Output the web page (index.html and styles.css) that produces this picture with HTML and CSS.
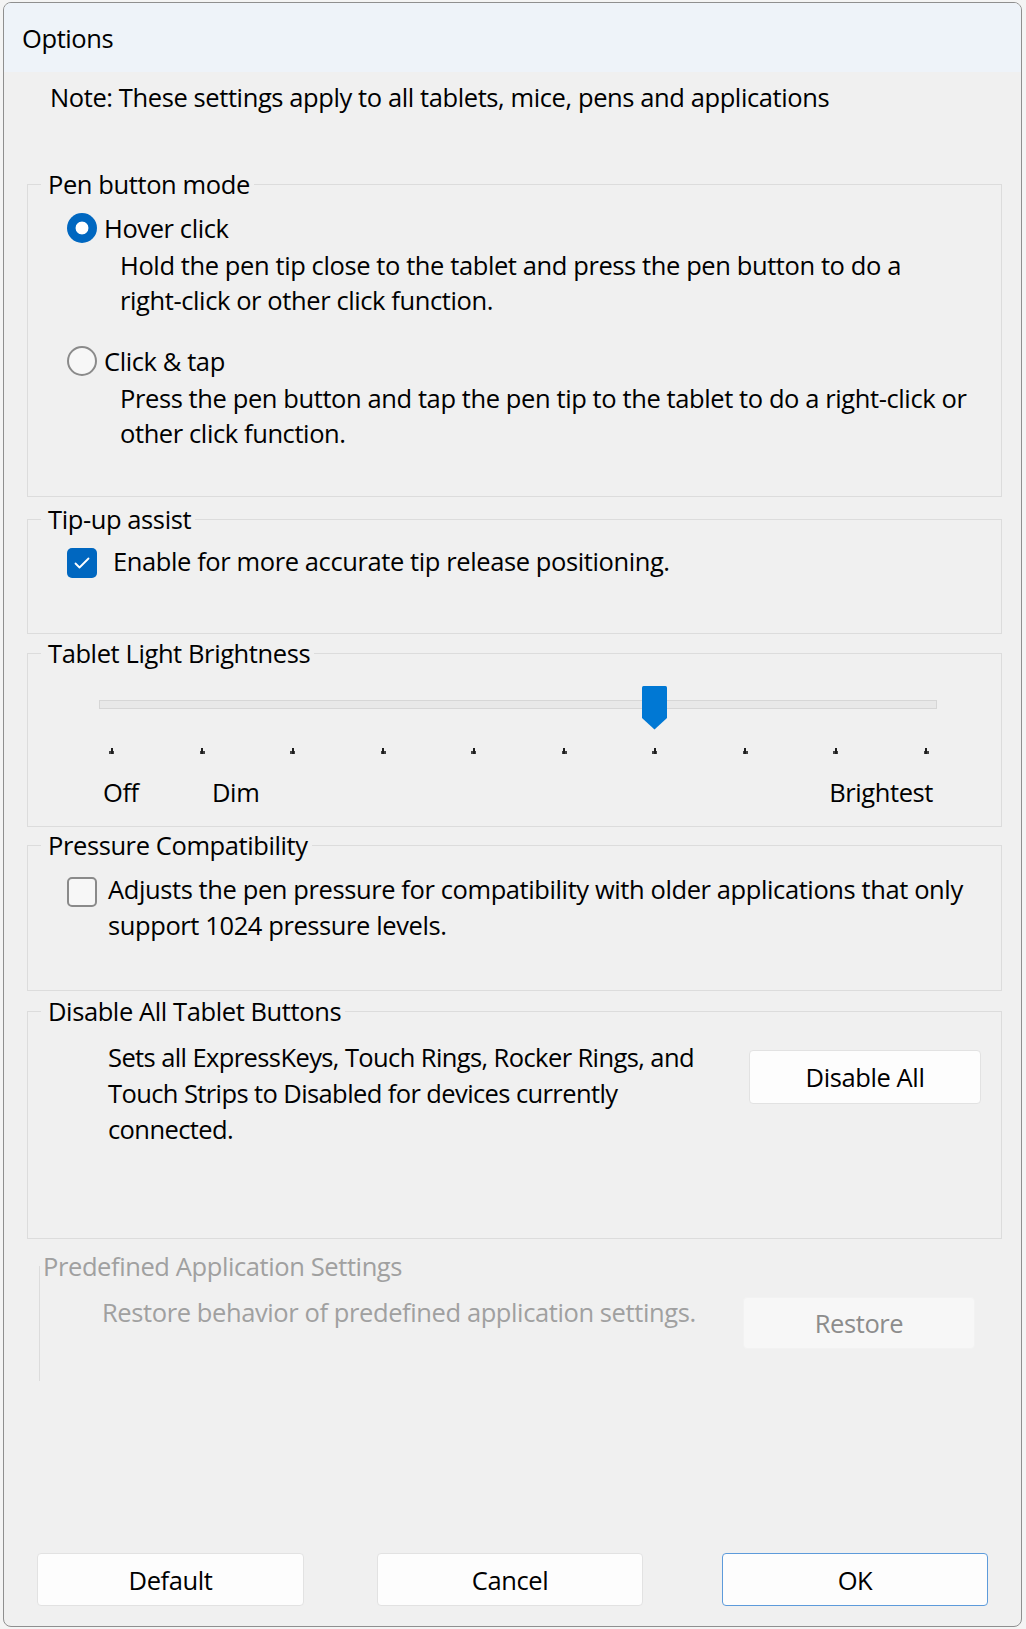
FILE: index.html
```html
<!DOCTYPE html>
<html lang="en">
<head>
<meta charset="utf-8">
<title>Options</title>
<link rel="stylesheet" href="styles.css">
</head>
<body>
<div class="window">
  <div class="titlebar">Options</div>
  <div class="client">
    <p class="note">Note: These settings apply to all tablets, mice, pens and applications</p>

    <fieldset class="group g-pen">
      <legend>Pen button mode</legend>
      <div class="gbody">
        <div class="opt">
          <span class="radio checked"></span><span class="opt-label">Hover click</span>
        </div>
        <p class="desc">Hold the pen tip close to the tablet and press the pen button to do a<br>right-click or other click function.</p>
        <div class="opt opt-2">
          <span class="radio"></span><span class="opt-label">Click &amp; tap</span>
        </div>
        <p class="desc">Press the pen button and tap the pen tip to the tablet to do a right-click or<br>other click function.</p>
      </div>
    </fieldset>

    <fieldset class="group g-tip">
      <legend>Tip-up assist</legend>
      <div class="gbody">
        <div class="chk-row">
          <span class="chk checked"><svg viewBox="0 0 30 30" width="30" height="30"><path d="M8.5 15.5 L12.5 19.5 L21.5 10.5" fill="none" stroke="#fff" stroke-width="1.8" stroke-linecap="round" stroke-linejoin="round"/></svg></span>
          <span class="chk-text wide-gap">Enable for more accurate tip release positioning.</span>
        </div>
      </div>
    </fieldset>

    <fieldset class="group g-light">
      <legend>Tablet Light Brightness</legend>
      <div class="gbody">
        <div class="slider">
          <div class="track"></div>
          <svg class="thumb" width="25" height="44" viewBox="0 0 25 44"><path d="M1.5 0 H23.5 Q25 0 25 1.5 V32 L12.5 43.5 L0 32 V1.5 Q0 0 1.5 0 Z" fill="#0078d4"/></svg>
          <div class="ticks">
            <span class="tick"></span><span class="tick"></span><span class="tick"></span><span class="tick"></span><span class="tick"></span>
            <span class="tick"></span><span class="tick"></span><span class="tick"></span><span class="tick"></span><span class="tick"></span>
          </div>
        </div>
        <div class="labels">
          <span class="lbl-off">Off</span><span class="lbl-dim">Dim</span><span class="lbl-bright">Brightest</span>
        </div>
      </div>
    </fieldset>

    <fieldset class="group g-press">
      <legend>Pressure Compatibility</legend>
      <div class="gbody">
        <div class="chk-row">
          <span class="chk"></span>
          <span class="chk-text">Adjusts the pen pressure for compatibility with older applications that only<br>support 1024 pressure levels.</span>
        </div>
      </div>
    </fieldset>

    <fieldset class="group g-disable">
      <legend>Disable All Tablet Buttons</legend>
      <div class="gbody action-row">
        <p class="action-text">Sets all ExpressKeys, Touch Rings, Rocker Rings, and<br>Touch Strips to Disabled for devices currently<br>connected.</p>
        <button class="btn btn-action" type="button">Disable All</button>
      </div>
    </fieldset>

    <fieldset class="group g-predef" disabled>
      <legend>Predefined Application Settings</legend>
      <div class="gbody action-row">
        <p class="action-text">Restore behavior of predefined application settings.</p>
        <button class="btn btn-action btn-disabled" type="button">Restore</button>
      </div>
    </fieldset>

    <div class="btn-row">
      <button class="btn btn-foot" type="button">Default</button>
      <button class="btn btn-foot btn-cancel" type="button">Cancel</button>
      <button class="btn btn-foot btn-ok" type="button">OK</button>
    </div>
  </div>
</div>
</body>
</html>
```
FILE: styles.css
```css
* { box-sizing: border-box; }
html, body { margin: 0; padding: 0; }
body {
  width: 1026px;
  height: 1629px;
  overflow: hidden;
  background: #f4f4f4;
  font-family: "Open Sans", "Noto Sans", sans-serif;
  font-size: 25.5px;
  letter-spacing: -0.4px;
  color: #000;
  white-space: nowrap;
}
p { margin: 0; }

.window {
  margin: 2px 0 0 3px;
  width: 1019px;
  height: 1625px;
  border: 1px solid #8f8f8f;
  border-radius: 8px;
  overflow: hidden;
  background: #f0f0f0;
  display: flex;
  flex-direction: column;
}
.titlebar {
  flex: none;
  height: 69px;
  background: #eef3f9;
  padding: 17px 0 0 18px;
  line-height: 36px;
}
.client {
  flex: 1;
  display: flex;
  flex-direction: column;
  padding: 7px 19px 20px 23px;
}
.note {
  line-height: 36px;
  margin-left: 23px;
}

.group {
  margin: 0;
  padding: 0;
  border: 1px solid #dcdcdc;
  min-width: 0;
}
.group legend {
  margin-left: 13px;
  padding: 0 4px 0 7px;
  line-height: 36px;
}
.g-pen { margin-top: 51px; }
.g-tip { margin-top: 4px; }
.g-light { margin-top: 1px; }
.g-press { margin-top: 0; }
.g-disable { margin-top: 2px; }
.g-predef {
  margin: 9px 0 0 12px;
  border: none;
  border-left: 1px solid #dcdcdc;
  color: #a0a0a0;
}
.g-predef legend { margin-left: 3px; padding: 0; }

/* pen button mode */
.g-pen .gbody { padding: 8px 0 45px 39px; }
.opt {
  display: flex;
  align-items: center;
  height: 36px;
  line-height: 36px;
}
.opt-2 { margin-top: 25px; }
.radio {
  flex: none;
  width: 30px;
  height: 30px;
  border-radius: 50%;
  border: 2px solid #8a8a8a;
  background: #f7f7f7;
  margin-right: 7px;
}
.radio.checked {
  border: none;
  background: radial-gradient(circle, #fff 0 6px, #0067c0 6.8px);
}
.desc {
  margin: 2px 0 0 53px;
  line-height: 35px;
}

/* checkboxes */
.g-tip .gbody { padding: 6px 0 54px 39px; }
.g-press .gbody { padding: 8px 0 47px 39px; }
.chk-row {
  display: flex;
  align-items: flex-start;
  line-height: 36px;
}
.chk {
  flex: none;
  width: 30px;
  height: 30px;
  margin-top: 5px;
  border: 2px solid #8a8a8a;
  border-radius: 5px;
  background: #f7f7f7;
  margin-right: 11px;
}
.g-press .chk { margin-top: 6px; }
.chk svg { display: block; }
.chk.checked {
  border: none;
  background: #0067c0;
}
.chk-text.wide-gap { margin-left: 5px; }

/* slider */
.g-light .gbody { padding: 29px 0 16px 0; }
.slider {
  position: relative;
  margin-left: 71px;
  width: 838px;
}
.track {
  height: 9px;
  background: #e8e8e8;
  border: 1px solid #d6d6d6;
}
.thumb {
  position: absolute;
  left: 543px;
  top: -14px;
  display: block;
}
.ticks {
  display: flex;
  justify-content: space-between;
  margin: 39px 0 0 10px;
  width: 820px;
}
.tick {
  width: 5px;
  height: 6px;
  background:
    linear-gradient(#1e1e1e, #1e1e1e) center top / 2px 100% no-repeat,
    linear-gradient(#444, #444) center bottom / 5px 3px no-repeat;
}
.labels {
  display: flex;
  margin-top: 20px;
  padding: 0 68px 0 75px;
  line-height: 36px;
}
.lbl-off { width: 109px; }
.lbl-bright { margin-left: auto; }

/* action groups */
.action-row {
  display: flex;
  align-items: flex-start;
}
.g-disable .gbody { padding: 10px 20px 91px 80px; }
.g-predef .gbody { padding: 10px 27px 32px 62px; }
.action-text { line-height: 36px; }
.g-disable .action-text { letter-spacing: -0.6px; }
.btn {
  font-family: inherit;
  font-size: 25.5px;
  letter-spacing: -0.4px;
  color: #000;
  background: #fdfdfd;
  border: 1px solid #e2e2e2;
  border-radius: 4px;
  padding: 0;
  line-height: 36px;
}
.btn-action {
  margin-left: auto;
  width: 232px;
  height: 54px;
  margin-top: 11px;
}
.btn-disabled {
  height: 52px;
  margin-top: 3px;
  background: #f7f7f7;
  border-color: #f2f2f2;
  color: #8c8c8c;
}

/* footer buttons */
.btn-row {
  margin-top: auto;
  display: flex;
  padding-left: 10px;
}
.btn-foot {
  width: 267px;
  height: 53px;
}
.btn-cancel { margin-left: 73px; width: 266px; }
.btn-ok { margin-left: 79px; width: 266px; border-color: #5d9bdb; }
```
